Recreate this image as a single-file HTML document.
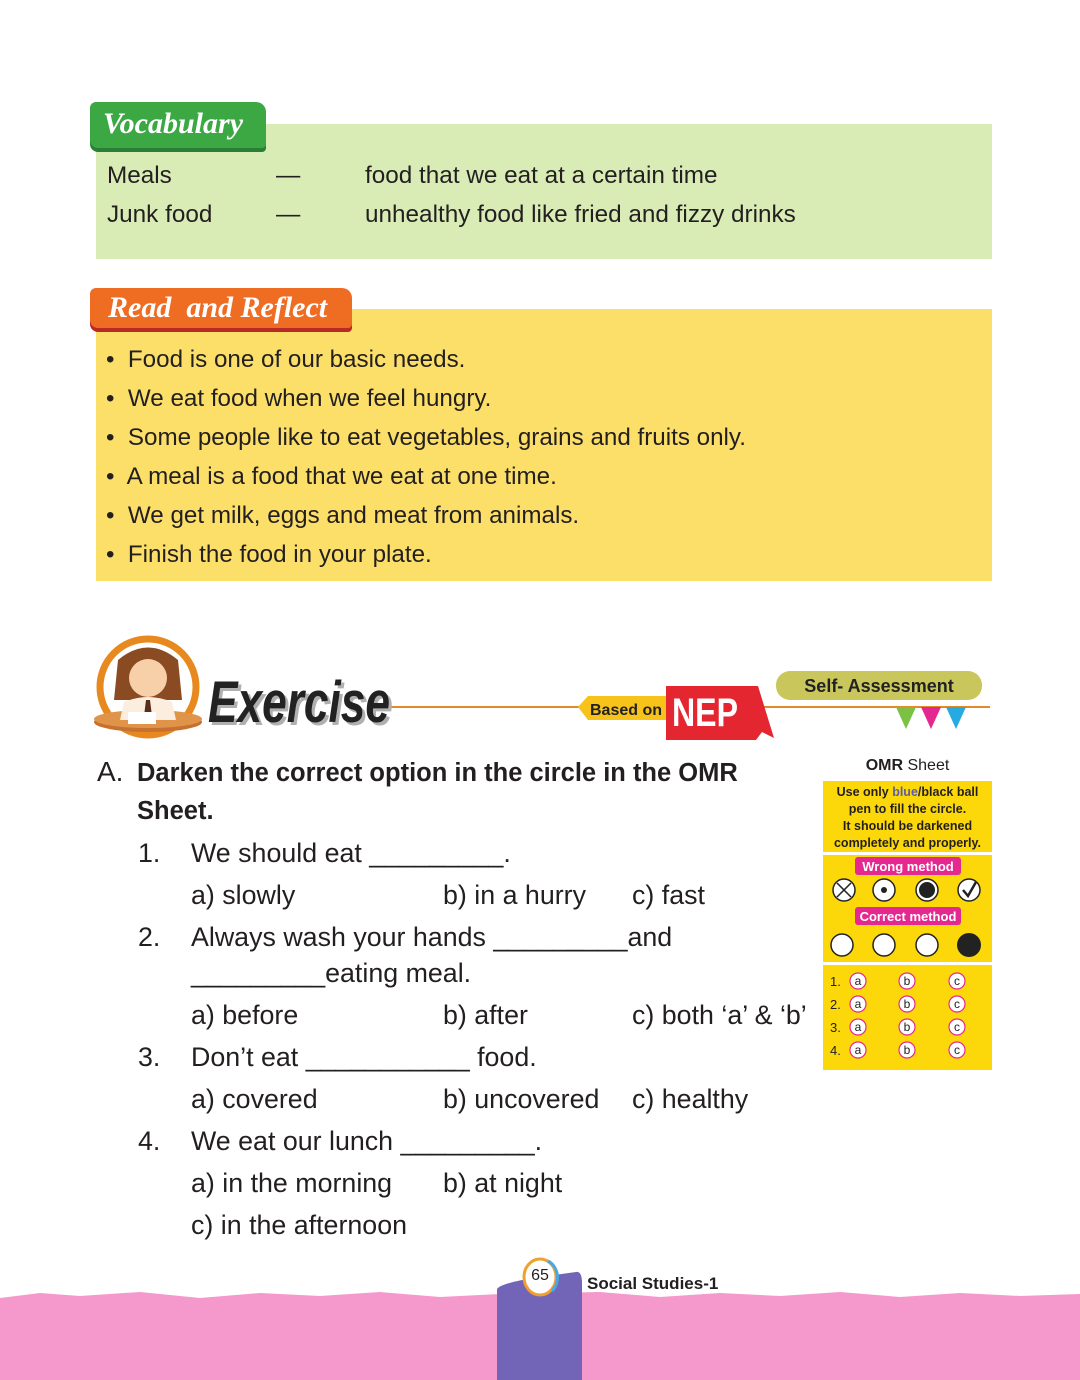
<!DOCTYPE html>
<html><head><meta charset="utf-8">
<style>
*{margin:0;padding:0;box-sizing:border-box}
body{width:1080px;height:1380px;background:#fff;position:relative;overflow:hidden;font-family:"Liberation Sans",sans-serif;color:#231f20}
.a{position:absolute;white-space:nowrap}
.t{font-size:24.3px;line-height:26px}
.q{font-size:26.8px;line-height:30px}
.script{font-family:"Liberation Serif",serif;font-style:italic;font-weight:bold;color:#fff}
</style></head><body>

<!-- Vocabulary -->
<div class="a" style="left:96px;top:124px;width:896px;height:135px;background:#d9ecb6"></div>
<div class="a" style="left:90px;top:102px;width:176px;height:46px;background:#3ca844;border-radius:6px 10px 4px 8px;box-shadow:0 4px 0 #2a7f36"></div>
<div class="a script" style="left:103px;top:106px;font-size:30px;line-height:36px">Vocabulary</div>
<div class="a t" style="left:107px;top:163px">Meals</div>
<div class="a t" style="left:276px;top:163px">—</div>
<div class="a t" style="left:365px;top:163px">food that we eat at a certain time</div>
<div class="a t" style="left:107px;top:202px">Junk food</div>
<div class="a t" style="left:276px;top:202px">—</div>
<div class="a t" style="left:365px;top:202px">unhealthy food like fried and fizzy drinks</div>

<!-- Read and Reflect -->
<div class="a" style="left:96px;top:309px;width:896px;height:272px;background:#fcdf69"></div>
<div class="a" style="left:90px;top:288px;width:262px;height:40px;background:#ef6c23;border-radius:6px 10px 4px 8px;box-shadow:0 4px 0 #b82a25"></div>
<div class="a script" style="left:108px;top:290px;font-size:30px;line-height:36px">Read&nbsp; and Reflect</div>
<div class="a" style="left:106px;top:340px;line-height:39px;font-size:24.2px">
•&nbsp; Food is one of our basic needs.<br>
•&nbsp; We eat food when we feel hungry.<br>
•&nbsp; Some people like to eat vegetables, grains and fruits only.<br>
•&nbsp; A meal is a food that we eat at one time.<br>
•&nbsp; We get milk, eggs and meat from animals.<br>
•&nbsp; Finish the food in your plate.
</div>

<!-- Exercise header -->
<svg class="a" style="left:90px;top:630px" width="900" height="115">
 <line x1="300" y1="77" x2="900" y2="77" stroke="#e08a2a" stroke-width="2"/>
 <circle cx="58" cy="57" r="48" fill="none" stroke="#e8891f" stroke-width="7"/>
 <ellipse cx="58" cy="92" rx="54" ry="10" fill="#c8702e"/>
 <ellipse cx="58" cy="89" rx="54" ry="9" fill="#e0944a"/>
 <path d="M28 30 Q58 5 88 30 L92 70 L24 70 Z" fill="#8a4a22"/>
 <circle cx="58" cy="48" r="19" fill="#f7cfa8"/>
 <path d="M30 90 L34 72 Q58 62 82 72 L86 90 Z" fill="#fbeede"/>
 <path d="M56 70 L60 70 L62 86 L54 86 Z" fill="#5a2e1a"/>
 <rect x="38" y="82" width="28" height="12" fill="#fff"/>
 <text x="118" y="92" textLength="182" lengthAdjust="spacingAndGlyphs" font-family="Liberation Sans" font-style="italic" font-weight="bold" font-size="58" fill="#b0b0b0" transform="translate(3,3)">Exercise</text>
 <text x="118" y="92" textLength="182" lengthAdjust="spacingAndGlyphs" font-family="Liberation Sans" font-style="italic" font-weight="bold" font-size="58" fill="#222">Exercise</text>
 <path d="M488 77 L498 66 L578 66 L578 90 L498 90 Z" fill="#f7c21a"/>
 <text x="500" y="85" textLength="72" lengthAdjust="spacingAndGlyphs" font-family="Liberation Sans" font-weight="bold" font-size="16" fill="#222">Based on</text>
 <path d="M576 56 L668 56 L684 108 L672 102 L666 110 L576 110 Z" fill="#e42631"/>
 <text x="582" y="96" textLength="66" lengthAdjust="spacingAndGlyphs" font-family="Liberation Sans" font-weight="bold" font-size="40" fill="#fff">NEP</text>
 <rect x="686" y="41" width="206" height="29" rx="14" fill="#c9c75c"/>
 <text x="789" y="62" text-anchor="middle" font-family="Liberation Sans" font-weight="bold" font-size="18" fill="#222">Self- Assessment</text>
 <path d="M806 77 L826 77 L816 99Z" fill="#7bc143"/>
 <path d="M831 77 L851 77 L841 99Z" fill="#e5288f"/>
 <path d="M856 77 L876 77 L866 99Z" fill="#25aae1"/>
</svg>

<!-- Questions -->
<div class="a" style="left:97px;top:756px;font-size:28px;line-height:32px">A.</div>
<div class="a" style="left:137px;top:754px;font-size:25.5px;line-height:38px;font-weight:bold">Darken the correct option in the circle in the OMR<br>Sheet.</div>
<div class="a q" style="left:138px;top:838px">1.</div><div class="a q" style="left:191px;top:838px">We should eat _________.</div>
<div class="a q" style="left:191px;top:880px">a) slowly</div><div class="a q" style="left:443px;top:880px">b) in a hurry</div><div class="a q" style="left:632px;top:880px">c) fast</div>
<div class="a q" style="left:138px;top:922px">2.</div><div class="a q" style="left:191px;top:922px">Always wash your hands _________and</div>
<div class="a q" style="left:191px;top:958px">_________eating meal.</div>
<div class="a q" style="left:191px;top:1000px">a) before</div><div class="a q" style="left:443px;top:1000px">b) after</div><div class="a q" style="left:632px;top:1000px">c) both ‘a’ &amp; ‘b’</div>
<div class="a q" style="left:138px;top:1042px">3.</div><div class="a q" style="left:191px;top:1042px">Don’t eat ___________ food.</div>
<div class="a q" style="left:191px;top:1084px">a) covered</div><div class="a q" style="left:443px;top:1084px">b) uncovered</div><div class="a q" style="left:632px;top:1084px">c) healthy</div>
<div class="a q" style="left:138px;top:1126px">4.</div><div class="a q" style="left:191px;top:1126px">We eat our lunch _________.</div>
<div class="a q" style="left:191px;top:1168px">a) in the morning</div><div class="a q" style="left:443px;top:1168px">b) at night</div>
<div class="a q" style="left:191px;top:1210px">c) in the afternoon</div>

<!-- OMR -->
<div class="a" style="left:823px;top:757px;width:169px;text-align:center;font-size:16px"><b>OMR</b> Sheet</div>
<div class="a" style="left:823px;top:781px;width:169px;height:289px;background:#fcd80a"></div>
<div class="a" style="left:823px;top:852px;width:169px;height:3px;background:#fff"></div>
<div class="a" style="left:823px;top:962px;width:169px;height:3px;background:#fff"></div>
<div class="a" style="left:823px;top:784px;width:169px;text-align:center;font-size:12.5px;line-height:17px;font-weight:bold">Use only <span style="color:#5b5ea6">blue</span>/black ball<br>pen to fill the circle.<br>It should be darkened<br>completely and properly.</div>
<svg class="a" style="left:823px;top:855px" width="169" height="215" font-family="Liberation Sans">
 <rect x="32" y="2" width="106" height="18" rx="3" fill="#e5288f"/>
 <text x="85" y="16" text-anchor="middle" font-size="13" font-weight="bold" fill="#fff">Wrong method</text>
 <g fill="#fff" stroke="#222" stroke-width="1.5">
  <circle cx="21" cy="35" r="11"/><circle cx="61" cy="35" r="11"/><circle cx="104" cy="35" r="11"/><circle cx="146" cy="35" r="11"/>
 </g>
 <path d="M14 28 L28 42 M28 28 L14 42" stroke="#222" stroke-width="1.5"/>
 <circle cx="61" cy="35" r="3" fill="#222"/>
 <circle cx="104" cy="35" r="8" fill="#222"/>
 <path d="M140 35 L145 41 L153 27" stroke="#222" stroke-width="2.5" fill="none"/>
 <rect x="32" y="52" width="106" height="18" rx="3" fill="#e5288f"/>
 <text x="85" y="66" text-anchor="middle" font-size="13" font-weight="bold" fill="#fff">Correct method</text>
 <g fill="#fff" stroke="#222" stroke-width="1.5">
  <circle cx="19" cy="90" r="11"/><circle cx="61" cy="90" r="11"/><circle cx="104" cy="90" r="11"/>
 </g>
 <circle cx="146" cy="90" r="12" fill="#222"/>
 <g font-size="13" fill="#222">
  <text x="7" y="131">1.</text><text x="7" y="154">2.</text><text x="7" y="177">3.</text><text x="7" y="200">4.</text>
 </g>
 <g fill="#fff" stroke="#e5288f" stroke-width="1.2">
  <circle cx="35" cy="126" r="8"/><circle cx="84" cy="126" r="8"/><circle cx="134" cy="126" r="8"/>
  <circle cx="35" cy="149" r="8"/><circle cx="84" cy="149" r="8"/><circle cx="134" cy="149" r="8"/>
  <circle cx="35" cy="172" r="8"/><circle cx="84" cy="172" r="8"/><circle cx="134" cy="172" r="8"/>
  <circle cx="35" cy="195" r="8"/><circle cx="84" cy="195" r="8"/><circle cx="134" cy="195" r="8"/>
 </g>
 <g font-size="12" fill="#222" text-anchor="middle">
  <text x="35" y="130">a</text><text x="84" y="130">b</text><text x="134" y="130">c</text>
  <text x="35" y="153">a</text><text x="84" y="153">b</text><text x="134" y="153">c</text>
  <text x="35" y="176">a</text><text x="84" y="176">b</text><text x="134" y="176">c</text>
  <text x="35" y="199">a</text><text x="84" y="199">b</text><text x="134" y="199">c</text>
 </g>
</svg>

<!-- Footer -->
<svg class="a" style="left:0;top:1255px" width="1080" height="125">
 <path d="M0 43 L40 38 L80 41 L140 37 L200 43 L260 38 L320 41 L380 37 L440 42 L500 39 L600 37 L660 42 L720 38 L780 41 L840 37 L900 42 L960 38 L1020 41 L1080 39 L1080 125 L0 125 Z" fill="#f598cc"/>
 <path d="M497 125 L497 34 Q500 28 540 22 L576 17 Q582 16 582 28 L582 125 Z" fill="#7265b7"/>
 <ellipse cx="540" cy="22" rx="16" ry="18" fill="#fff" stroke="#f0a030" stroke-width="3"/>
 <path d="M548 6 A16 18 0 0 1 552 36" stroke="#4aa8de" stroke-width="3" fill="none"/>
</svg>
<div class="a" style="left:523px;top:1267px;width:34px;text-align:center;font-size:16px">65</div>
<div class="a" style="left:587px;top:1274px;font-size:17px;font-weight:bold">Social Studies-1</div>
</body></html>
